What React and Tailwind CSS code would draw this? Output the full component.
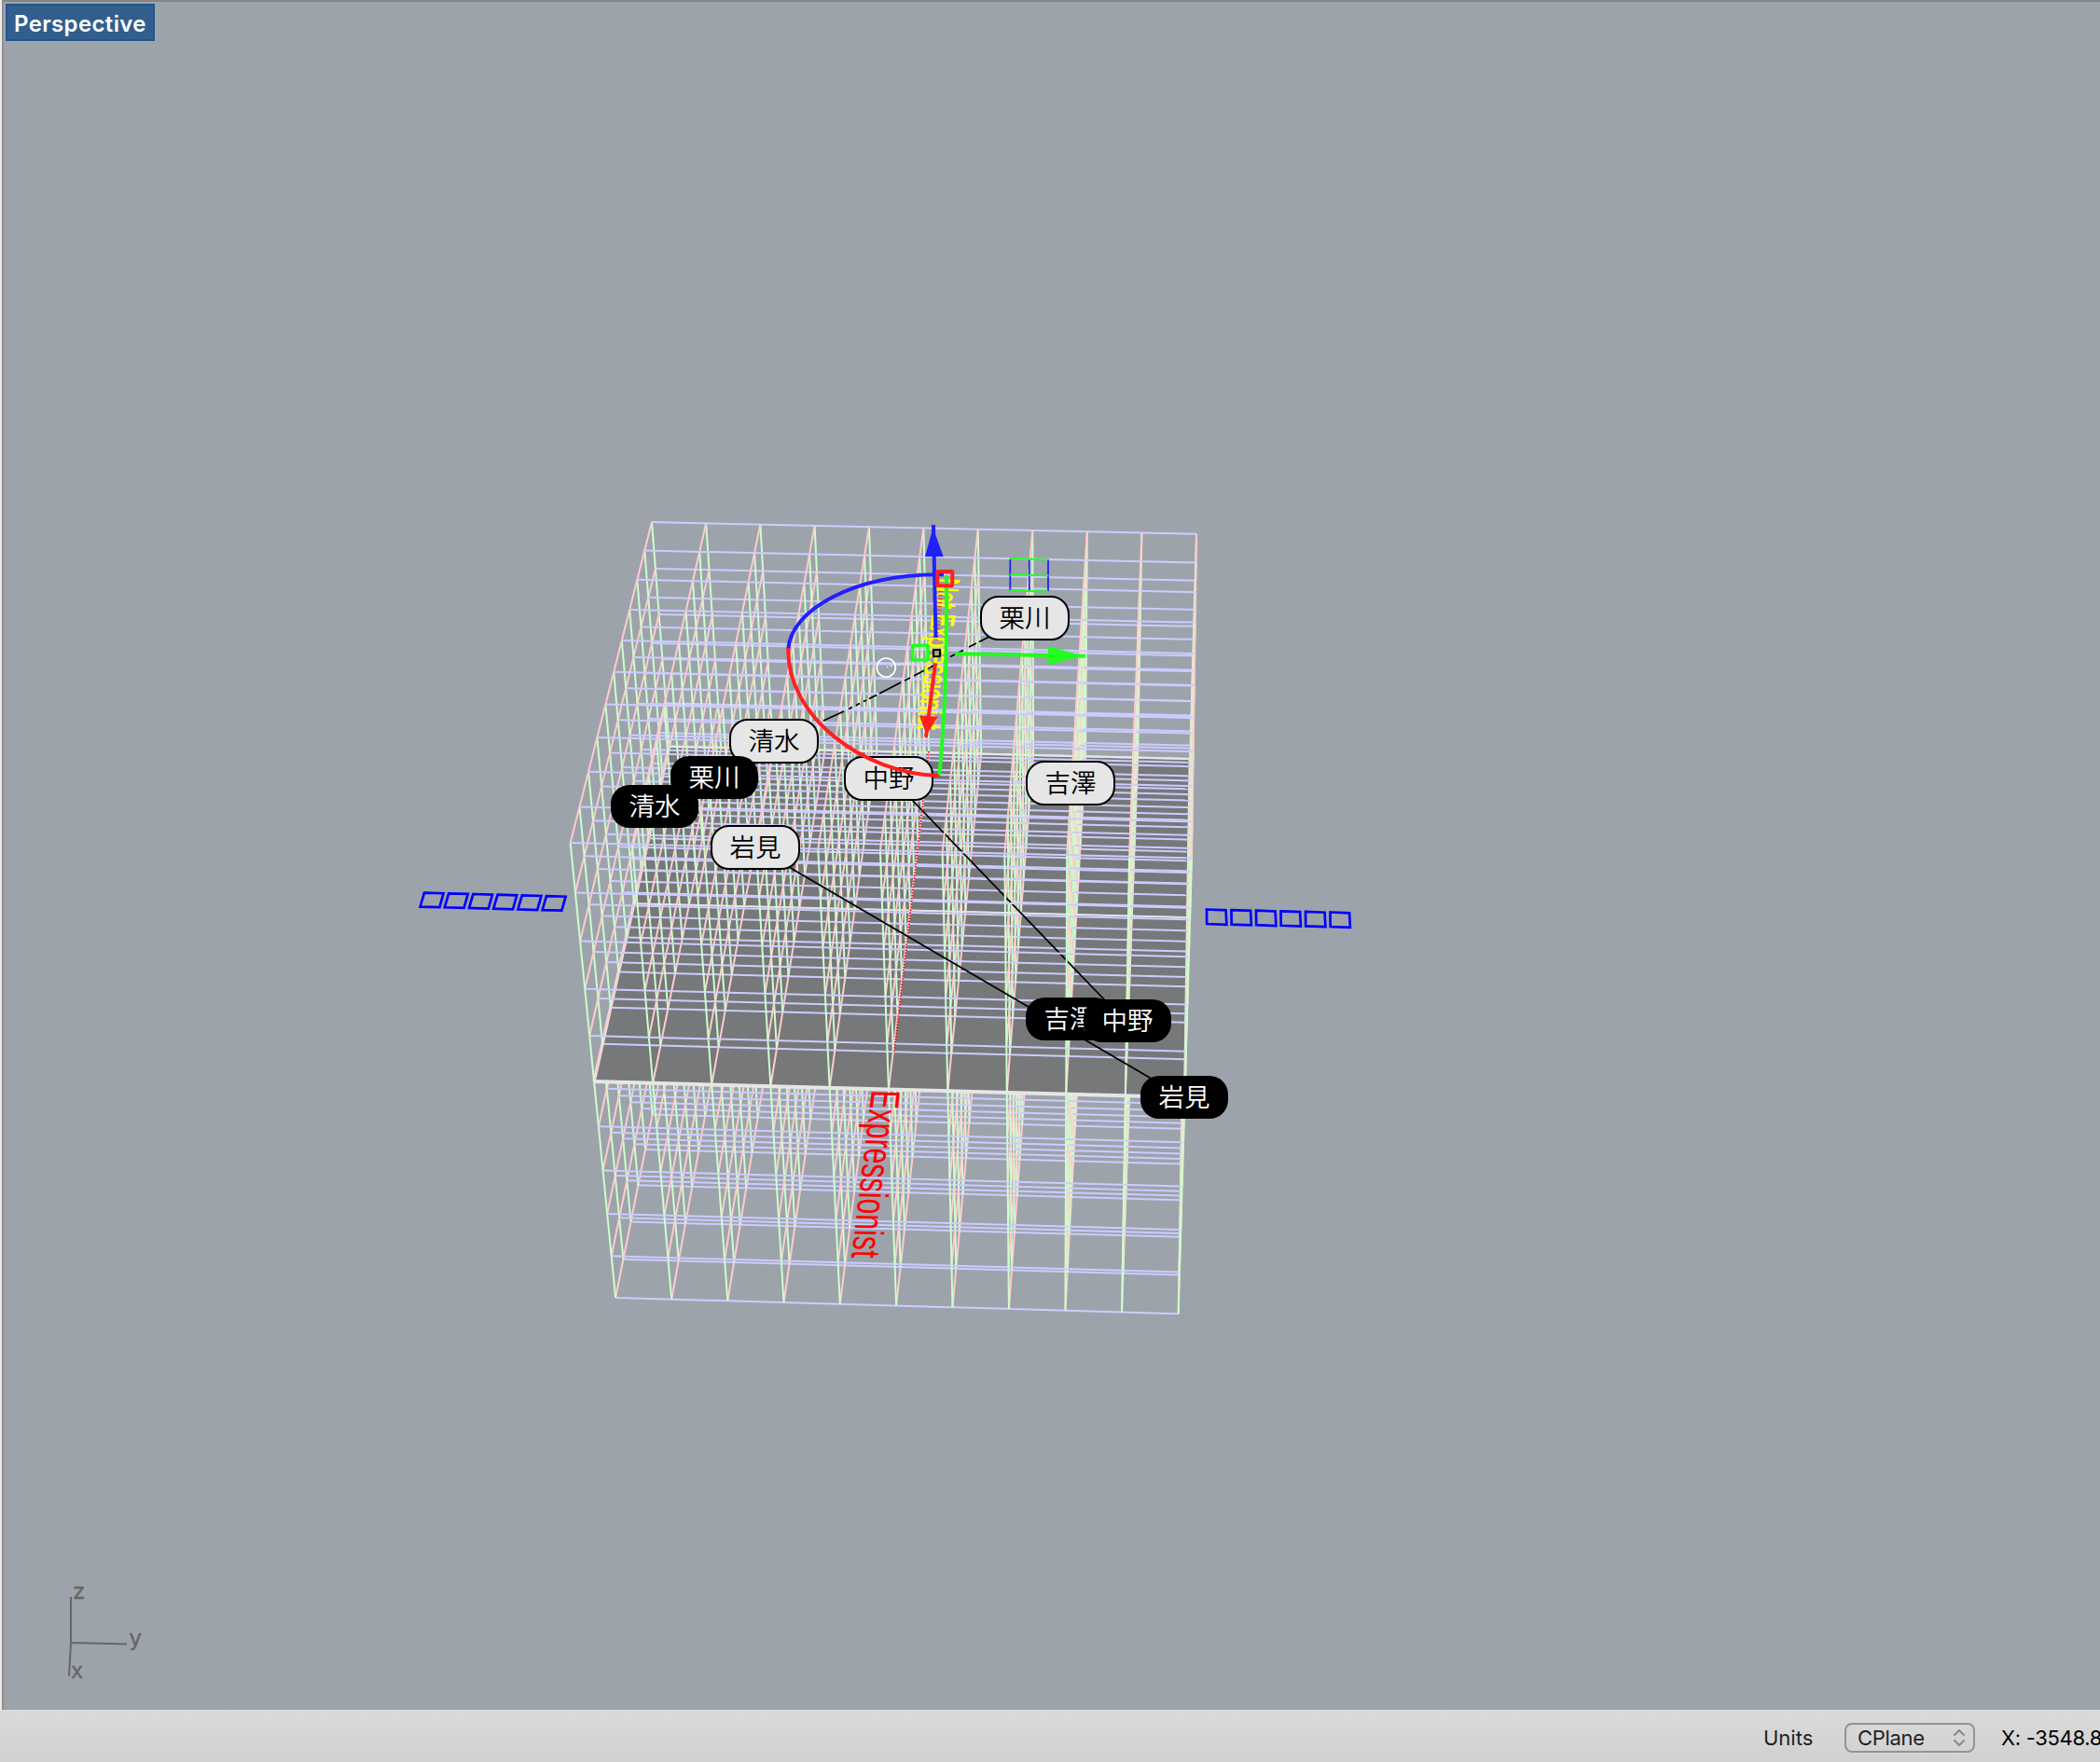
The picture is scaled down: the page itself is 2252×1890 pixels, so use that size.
const CAM = {
  u: [699.015, -16.292, 57.794, 10.259],
  v: [560.029, 23.235, 0.996, 55.443],
  w: [1, -0.012356, -0.0004755, 0.009112],
};

const dot = (r, x, y, z) => r[0] + r[1] * x + r[2] * y + r[3] * z;

// Perspective projection of a lattice point; z grows downwards.
function project(x, y, z) {
  const w = dot(CAM.w, x, y, z);
  return [dot(CAM.u, x, y, z) / w, dot(CAM.v, x, y, z) / w];
}

const at = (p) => project(...p).map((n) => n.toFixed(2)).join(" ");
const seg = (a, b) => `M${at(a)}L${at(b)}`;
const STEPS = [0, 1, 2, 3, 4, 5, 6, 7, 8, 9, 10];

const PINK = "#ffcccc";
const GREEN = "#ccffcc";
const LAVENDER = "#ccccff";
const GRID_WIDTH = 2;

// One depth slice of the lattice between two heights, drawn bottom up.
function Slab({ x, top, bottom }) {
  const out = [];
  for (let z = bottom; z >= top; z--) {
    if (x > 0) {
      out.push(
        <path key={`p${z}`} stroke={PINK} d={STEPS.map((y) => seg([x - 1, y, z], [x, y, z])).join("")} />
      );
    }
    out.push(<path key={`l${z}`} stroke={LAVENDER} d={seg([x, 0, z], [x, 10, z])} />);
    if (z > top) {
      out.push(
        <path key={`g${z}`} stroke={GREEN} d={STEPS.map((y) => seg([x, y, z], [x, y, z - 1])).join("")} />
      );
    }
  }
  return (
    <g fill="none" strokeWidth={GRID_WIDTH}>
      {out}
    </g>
  );
}

function Floor() {
  const c = [[0, 0, 5], [0, 10, 5], [10, 10, 5], [10, 0, 5]];
  return (
    <g fill="none" stroke="#e6e6e6">
      <path d={`M${c.map(at).join("L")}Z`} fill="#77787a" stroke="none" />
      <path d={seg(c[0], c[3])} strokeWidth="3.4" />
      <path d={seg(c[1], c[2])} strokeWidth="3" />
    </g>
  );
}

const EDGE_WIDTH = { 0: 2.4, 5: 1.5, 10: 4 };

function Lattice() {
  return (
    <g>
      {STEPS.map((x) => (
        <Slab key={x} x={x} top={5} bottom={10} />
      ))}
      <Floor />
      {STEPS.map((x) => (
        <g key={x}>
          <Slab x={x} top={0} bottom={5} />
          {x % 5 === 0 && (
            <path d={seg([x, 0, 5], [x, 10, 5])} stroke="#e6e6e6" strokeWidth={EDGE_WIDTH[x]} />
          )}
          {x === 9 && <path d="M953 832L1209 1098" stroke="#000" strokeWidth="1.8" />}
        </g>
      ))}
      <path
        d="M883 773L905 763M910 760.5L914 758.5M918 756.5L922 754.5M926 752.5L929 751M932 749.5L940 745.5M943 744L966 732M970 730L976 727M980 725L1016 706M1019 704.5L1033 697.5M1039 694L1047 690M1050 688.5L1062 682.5"
        stroke="#000"
        strokeWidth="1.8"
      />
      <path d="M996 806L959 1128" stroke="#ff0000" strokeWidth="1.8" strokeDasharray="1.4 1.7" />
      <path d="M810 909L1269 1177" stroke="#000" strokeWidth="1.8" />
    </g>
  );
}

function SquareRow({ points, dx, dy }) {
  return [0, 1, 2, 3, 4, 5].map((i) => (
    <polygon
      key={i}
      points={points}
      transform={`translate(${i * dx} ${i * dy})`}
      fill="none"
      stroke="#0000ff"
      strokeWidth="2.7"
    />
  ));
}

function CameraWidget() {
  return (
    <g fill="none" strokeWidth="1.8">
      <path stroke="#2020ff" d="M1083.3 600V633M1103.8 600.5V634M1124 600V634.5" />
      <path stroke="#20ff20" d="M1083 599L1124.5 600.3M1083 616.3L1124.5 617.3M1083 633.5L1124.5 634.5" />
    </g>
  );
}

function Gizmo() {
  return (
    <g fill="none" strokeWidth="4">
      <path stroke="#2020ff" d="M1012 616.3C915 615 848 655 845.3 696" />
      <path stroke="#ff2020" d="M845.3 695C843 768 925 830 1007.5 832" />
      <path stroke="#20ff20" d="M1015 617C1015.5 700 1014 760 1007.5 831" />
      <path stroke="#2020ff" d="M1001 563L1003.5 684" />
      <path fill="#2020ff" stroke="none" d="M1000.5 566L992 597H1011.7Z" />
      <path stroke="#20ff20" d="M1024 701.3L1164 703.7" />
      <path fill="#20ff20" stroke="none" d="M1162 703.6L1124 693.3V713.3Z" />
      <path stroke="#ff2020" d="M1003 711.3L993 790.7" />
      <path fill="#ff2020" stroke="none" d="M993.5 788L985.7 767.3L1006 768.7Z" />
      <rect x="1005.3" y="613" width="16" height="15.3" rx="1" stroke="#ff2020" strokeWidth="4" />
      <rect x="978.7" y="692.3" width="16.3" height="15.7" rx="1" stroke="#20ff20" strokeWidth="3.6" />
      <rect x="1001" y="697" width="7" height="7" stroke="#000" strokeWidth="2.2" />
    </g>
  );
}

const LABELS = [
  { text: "栗川", x: 1051, y: 639 },
  { text: "清水", x: 782, y: 771 },
  { text: "中野", x: 905, y: 811 },
  { text: "吉澤", x: 1100, y: 816 },
  { text: "岩見", x: 762, y: 885 },
  { text: "栗川", x: 719, y: 811, dark: true },
  { text: "清水", x: 655, y: 842, dark: true },
  { text: "吉澤", x: 1100, y: 1070, dark: true },
  { text: "中野", x: 1162, y: 1072, dark: true },
  { text: "岩見", x: 1223, y: 1154, dark: true },
];

function Pin({ text, x, y, dark }) {
  const tone = dark
    ? "h-[46px] w-[94px] bg-black text-white"
    : "h-12 w-24 border-2 border-black bg-[#e6e6e6] text-black";
  return (
    <div
      className={`absolute flex items-center justify-center rounded-[20px] pt-0.5 text-[27.5px] leading-none font-[350] ${tone}`}
      style={{ left: x, top: y }}
    >
      {text}
    </div>
  );
}

function AxisIcon() {
  return (
    <g>
      <path d="M76 1713V1762L136 1763.5M76 1762L74 1798" fill="none" stroke="#666" strokeWidth="2" />
      <g fill="#666" stroke="#666" strokeWidth="0.4" fontSize="24" fontFamily='"Inter", sans-serif'>
        <text x="78" y="1715">z</text>
        <text x="138.5" y="1765">y</text>
        <text x="76" y="1799.5">x</text>
      </g>
    </g>
  );
}

export default function App() {
  return (
    <div className="flex h-[1890px] w-[2252px] flex-col overflow-hidden bg-[#ececec] font-['Inter','Noto_Sans_CJK_JP',sans-serif]">
      <main className="relative ml-0.5 h-[1834px] shrink-0 overflow-hidden border-t-2 border-l-2 border-t-[#858585] border-l-[#8f8f8d] bg-[#9da3ab]">
        <div className="absolute -top-0.5 -left-1 h-[1834px] w-[2252px]">
          <svg className="absolute inset-0" width="2252" height="1834">
            <Lattice />
            <CameraWidget />
            <SquareRow points="455,957.6 475.6,958.2 471.4,973.2 450.6,972.6" dx={26.2} dy={0.7} />
            <SquareRow points="1294,975.5 1314.6,976.3 1315.4,991.8 1294.2,991" dx={26.5} dy={0.6} />
            <g fontSize="10" fontFamily='"Liberation Sans", sans-serif'>
              <text transform="matrix(-0.37 3.03 -4.4 -0.1 935 1169)" fill="#ff0000">
                Expressionist
              </text>
              <text
                transform="matrix(-0.278 2.09 -3.5 -0.08 1005 620)"
                fill="#ffff00"
                stroke="#ffff00"
                strokeWidth="0.25"
              >
                Not Expressionist
              </text>
            </g>
            <path d="M1009 634L1003 690" stroke="#ff0000" strokeWidth="5" strokeDasharray="1 3" opacity="0.8" />
            <circle cx="950.3" cy="716" r="10" fill="none" stroke="#fff" strokeWidth="1.7" />
            <path d="M951 715.5L1000 705" stroke="#fff" strokeWidth="1.6" strokeDasharray="1.2 3" />
            <AxisIcon />
          </svg>
          {LABELS.map((l) => (
            <Pin key={`${l.x}-${l.y}`} {...l} />
          ))}
          <svg className="absolute inset-0" width="2252" height="1834">
            <Gizmo />
          </svg>
          <div className="absolute top-1 left-1.5 flex h-10 w-40 items-center border-2 border-[#24568a] bg-[#325e8d] pt-1 pl-[7px] text-[24px] leading-none font-semibold tracking-[0.35px] text-white">
            Perspective
          </div>
        </div>
      </main>
      <footer className="flex h-14 items-center bg-linear-to-b from-[#dadada] to-[#d1d1d1] pt-2 pb-1 text-[22px] leading-none whitespace-nowrap text-[#222]">
        <span className="ml-[1891px] w-[87px] shrink-0">Units</span>
        <div className="flex h-8 w-[140px] shrink-0 items-center justify-between rounded-lg border-2 border-[#949494] pr-2 pl-3">
          <span className="tracking-[-0.3px]">CPlane</span>
          <svg width="14" height="20" viewBox="0 0 14 20" fill="none" stroke="#8c8c8c" strokeWidth="2.2" strokeLinecap="round" strokeLinejoin="round">
            <path d="M2 7L7 2L12 7M2 13L7 18L12 13" />
          </svg>
        </div>
        <span className="ml-7 shrink-0 tracking-[-0.3px] text-black">X: -3548.8</span>
      </footer>
    </div>
  );
}
